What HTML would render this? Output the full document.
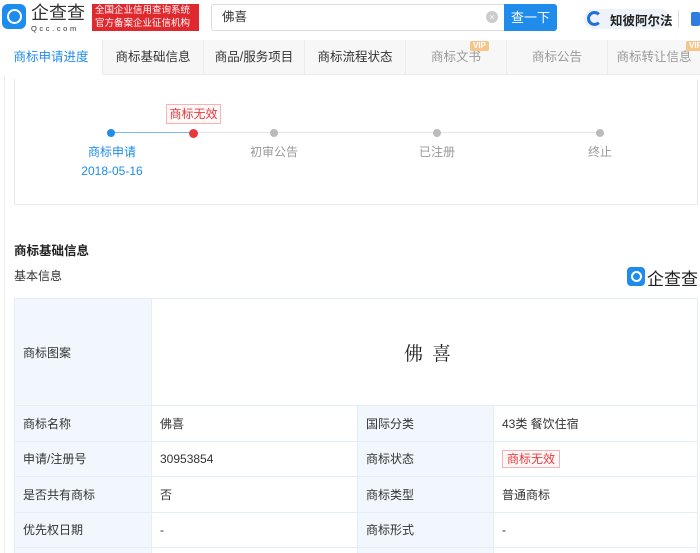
<!DOCTYPE html>
<html><head><meta charset="utf-8"><style>
*{margin:0;padding:0;box-sizing:border-box}
html,body{width:700px;height:553px;overflow:hidden}
body{background:#fff;font-family:"Liberation Sans","Noto Sans CJK SC",sans-serif;font-size:12px;color:#333;position:relative}
.abs{position:absolute}
.tab{position:absolute;top:40px;height:35px;line-height:35px;text-align:center;background:#f7f7f7;border-right:1px solid #ebebeb;border-bottom:1px solid #ebebeb;font-size:12.5px;color:#333}
.tab.g{color:#999}
.vip{position:absolute;top:1px;font-size:8px;line-height:10px;background:#f5c58a;color:#fff;font-weight:bold;padding:0 3px;border-radius:2px}
.dot{position:absolute;top:129px;width:8px;height:8px;border-radius:50%;background:#bbb}
.lbl{position:absolute;top:143px;font-size:12px;color:#999;width:100px;text-align:center}
table{position:absolute;left:14px;top:298px;width:684px;border-collapse:collapse}
td{border:1px solid #e4eef7;height:35.5px;padding:0 8px;font-size:12px;color:#333}
td.l{background:#f1f7fc}
</style></head><body>
<div class="abs" style="left:4px;top:76px;width:1px;height:477px;background:#eee"></div>
<!-- header -->
<div class="abs" style="left:2px;top:4px;width:24px;height:25px;background:#1c8cf0;border-radius:6px"></div>
<div class="abs" style="left:7px;top:9px;width:15px;height:15px;border:2.5px solid #fff;border-radius:50%"></div>
<div class="abs" style="left:31px;top:3px;font-size:18px;line-height:20px;color:#333">企查查</div>
<div class="abs" style="left:31px;top:24px;font-size:7.5px;letter-spacing:2.6px;color:#333">Qcc.com</div>
<div class="abs" style="left:92px;top:4px;width:107px;height:27px;background:#e0282f;color:#fff;font-size:9.5px;line-height:12.5px;padding:1px 3px;white-space:nowrap">全国企业信用查询系统<br>官方备案企业征信机构</div>
<div class="abs" style="left:211px;top:4px;width:293px;height:27px;border:1px solid #ddd;border-right:none;border-radius:3px 0 0 3px;padding-left:10px;line-height:25px;font-size:12.5px;color:#333">佛喜</div>
<div class="abs" style="left:486px;top:11px;width:12px;height:12px;border-radius:50%;background:#ccc;color:#fff;font-size:9px;line-height:12px;text-align:center">×</div>
<div class="abs" style="left:504px;top:4px;width:53px;height:27px;background:#1f8cec;color:#fff;line-height:27px;text-align:center;font-size:13px;border-radius:0 3px 3px 0">查一下</div>
<div class="abs" style="left:584px;top:9px;width:86px;height:20px;background:#eef3fb;border-radius:10px"></div>
<div class="abs" style="left:587px;top:11px;width:15px;height:15px;border:3px solid #1f6fe0;border-radius:50%;border-right-color:transparent"></div>
<div class="abs" style="left:610px;top:10px;font-size:12.5px;font-weight:bold;color:#222">知彼阿尔法</div>
<div class="abs" style="left:678px;top:10px;width:1px;height:18px;background:#ddd"></div>
<div class="abs" style="left:691px;top:12px;width:9px;height:14px;background:#2f7de0;border-radius:2px"></div>
<!-- tabs -->
<div class="tab" style="left:0;width:103px;background:#fff;color:#1f8cec;border-bottom-color:#fff">商标申请进度</div>
<div class="tab" style="left:103px;width:101px">商标基础信息</div>
<div class="tab" style="left:204px;width:101px">商品/服务项目</div>
<div class="tab" style="left:305px;width:101px">商标流程状态</div>
<div class="tab g" style="left:406px;width:101px">商标文书<span class="vip" style="left:64px">VIP</span></div>
<div class="tab g" style="left:507px;width:101px">商标公告</div>
<div class="tab g" style="left:608px;width:92px;border-right:none">商标转让信息<span class="vip" style="left:78px">VIP</span></div>
<!-- progress card -->
<div class="abs" style="left:14px;top:79px;width:684px;height:126px;border:1px solid #e8e8e8;border-top:none"></div>
<div class="abs" style="left:111px;top:132px;width:82px;height:1px;background:#7db8ee"></div>
<div class="abs" style="left:193px;top:132px;width:407px;height:1px;background:#e6e6e6"></div>
<div class="abs" style="left:166px;top:104px;width:55px;height:20px;border:1px solid #f7b2b2;color:#e8383d;text-align:center;line-height:18px;font-size:12px;background:#fff8f8">商标无效</div>
<div class="dot" style="left:107px;background:#1f8cec"></div>
<div class="dot" style="left:189px;width:9px;height:9px;background:#e8383d"></div>
<div class="dot" style="left:270px"></div>
<div class="dot" style="left:433px"></div>
<div class="dot" style="left:596px"></div>
<div class="lbl" style="left:62px;color:#1f8cec">商标申请<br><span style="line-height:22px">2018-05-16</span></div>
<div class="lbl" style="left:224px">初审公告</div>
<div class="lbl" style="left:387px">已注册</div>
<div class="lbl" style="left:550px">终止</div>
<!-- basic info -->
<div class="abs" style="left:14px;top:240px;font-size:12.5px;font-weight:bold;color:#222">商标基础信息</div>
<div class="abs" style="left:14px;top:267px;font-size:12px;color:#333">基本信息</div>
<div class="abs" style="left:627px;top:267px;width:18px;height:19px;background:#1f8cec;border-radius:4px"></div>
<div class="abs" style="left:631px;top:271px;width:11px;height:11px;border:2px solid #fff;border-radius:50%"></div>
<div class="abs" style="left:647px;top:265px;font-size:17px;color:#222">企查查</div>
<table>
<tr><td class="l" style="width:137px;height:107px">商标图案</td><td colspan="3" style="padding-left:252px;font-size:19px;font-family:'Noto Serif CJK SC',serif;letter-spacing:9px;color:#222">佛喜</td></tr>
<tr><td class="l">商标名称</td><td style="width:206px">佛喜</td><td class="l" style="width:136px">国际分类</td><td>43类 餐饮住宿</td></tr>
<tr><td class="l">申请/注册号</td><td>30953854</td><td class="l">商标状态</td><td><span style="border:1px solid #f7b2b2;color:#e8383d;padding:1px 4px;background:#fff8f8">商标无效</span></td></tr>
<tr><td class="l">是否共有商标</td><td>否</td><td class="l">商标类型</td><td>普通商标</td></tr>
<tr><td class="l">优先权日期</td><td>-</td><td class="l">商标形式</td><td>-</td></tr>
<tr><td class="l"></td><td></td><td class="l"></td><td></td></tr>
</table>
</body></html>
